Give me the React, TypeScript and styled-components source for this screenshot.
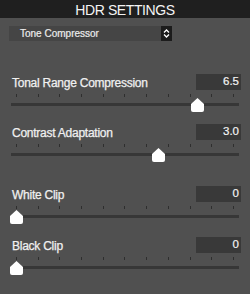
import React from 'react';
import styled, { createGlobalStyle } from 'styled-components';

const GlobalStyle = createGlobalStyle`
  html, body {
    margin: 0;
    padding: 0;
    background: #505050;
  }
`;

const Panel = styled.div`
  width: 250px;
  height: 294px;
  background: #505050;
  font-family: "Liberation Sans", Arial, sans-serif;
  display: flex;
  flex-direction: column;
  overflow: hidden;
`;

const Header = styled.div`
  height: 18px;
  background: #1f1f1f;
  color: #f4f4f4;
  font-size: 14px;
  line-height: 20px;
  letter-spacing: -0.4px;
  text-align: center;
`;

const Body = styled.div`
  display: flex;
  flex-direction: column;
  padding: 8px 9px 0 9px;
`;

const Select = styled.div`
  width: 163px;
  height: 15px;
  background: #454545;
  display: flex;
  align-items: stretch;
  color: #ececec;
  font-size: 10px;
  line-height: 15px;
`;

const SelectLabel = styled.span`
  flex: 1;
  padding-left: 11px;
  -webkit-text-stroke: 0.2px #ececec;
`;

const SelectArrow = styled.div`
  width: 11px;
  background: #1c1c1c;
  display: flex;
  align-items: center;
  justify-content: center;
`;

const Field = styled.div<{ $top: number }>`
  display: flex;
  flex-direction: column;
  margin-top: ${(p) => p.$top}px;
  height: 34px;
`;

const Row = styled.div`
  display: flex;
  align-items: center;
  justify-content: space-between;
  height: 16px;
`;

const Label = styled.span`
  margin-left: 3px;
  padding-top: 1px;
  color: #f0f0f0;
  font-size: 12px;
  line-height: 16px;
  letter-spacing: -0.25px;
  -webkit-text-stroke: 0.25px #f0f0f0;
`;

const ValueBox = styled.div`
  width: 43px;
  height: 16px;
  background: #393939;
  color: #f4f4f4;
  font-size: 11.5px;
  line-height: 14px;
  text-align: right;
  padding-right: 2px;
  -webkit-text-stroke: 0.2px #f4f4f4;
`;

const SliderArea = styled.div`
  position: relative;
  margin-left: 2px;
  width: 228px;
  height: 20px;
`;

const Ticks = styled.div`
  display: flex;
  justify-content: space-between;
  padding: 0 5px;
  margin-top: 4px;
  height: 3px;
`;

const Tick = styled.div`
  width: 1px;
  height: 3px;
  background: #2e2e2e;
`;

const Track = styled.div`
  margin-top: 6px;
  height: 3px;
  background: #373737;
`;

const Thumb = styled.svg`
  position: absolute;
  top: 8px;
  width: 13px;
  height: 14px;
`;

const fields = [
  { label: 'Tonal Range Compression', value: '6.5', pos: 0.832, top: 33 },
  { label: 'Contrast Adaptation', value: '3.0', pos: 0.654, top: 16 },
  { label: 'White Clip', value: '0', pos: 0, top: 28 },
  { label: 'Black Clip', value: '0', pos: 0, top: 17 },
];

const App: React.FC = () => (
  <Panel>
    <GlobalStyle />
    <Header>HDR SETTINGS</Header>
    <Body>
      <Select>
        <SelectLabel>Tone Compressor</SelectLabel>
        <SelectArrow>
          <svg width="7" height="9" viewBox="0 0 7 9">
            <path d="M1 3.5 L3.5 1 L6 3.5 M1 5.5 L3.5 8 L6 5.5" stroke="#fff" strokeWidth="1.3" fill="none" />
          </svg>
        </SelectArrow>
      </Select>
      {fields.map((f) => (
        <Field key={f.label} $top={f.top}>
          <Row>
            <Label>{f.label}</Label>
            <ValueBox>{f.value}</ValueBox>
          </Row>
          <SliderArea>
            <Ticks>
              {Array.from({ length: 11 }).map((_, i) => (
                <Tick key={i} />
              ))}
            </Ticks>
            <Track />
            <Thumb viewBox="0 0 13 14" style={{ left: 5 + f.pos * 217 - 6 }}>
              <path d="M6.5 0 L13 6 V12 Q13 14 11 14 H2 Q0 14 0 12 V6 Z" fill="#fff" />
            </Thumb>
          </SliderArea>
        </Field>
      ))}
    </Body>
  </Panel>
);

export default App;
